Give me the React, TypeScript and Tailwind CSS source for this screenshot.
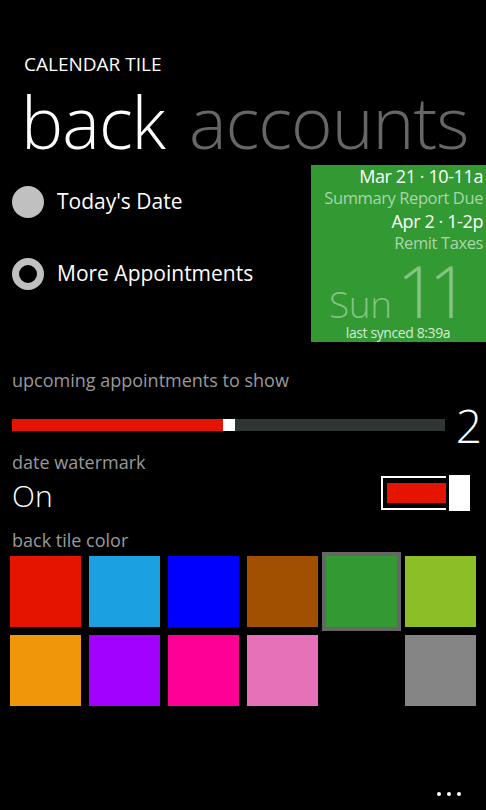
import React from 'react';

const row1 = ['#e51400', '#1ba1e2', '#0000ff', '#a05000', '#339933', '#8cbf26'];
const row2 = ['#f09609', '#a200ff', '#ff0097', '#e671b8', 'transparent', '#858585'];

function Swatch({ color, selected }: { color: string; selected?: boolean }) {
  return (
    <div className={`w-[79px] h-[79px] flex items-center justify-center ${selected ? 'border-[4px] border-[#666666]' : ''}`}>
      <div className="w-[71px] h-[71px]" style={{ backgroundColor: color }} />
    </div>
  );
}

export default function App() {
  return (
    <div className="w-[486px] h-[810px] bg-black text-white overflow-hidden flex flex-col font-['Open_Sans',sans-serif]">
      {/* Header */}
      <div className="pl-[24px] pt-[52px] text-[19px] leading-[24px]">CALENDAR TILE</div>
      <div className="flex gap-[24px] pl-[21px] mt-[9px] text-[71px] leading-[74px] font-light tracking-[-1px]">
        <span>back</span>
        <span className="text-[#666666]">accounts</span>
      </div>

      {/* Radios + tile */}
      <div className="flex justify-between mt-[6px]">
        <div className="flex flex-col pl-[12px] pt-[21px] gap-[40px]">
          <div className="flex items-center gap-[13px]">
            <div className="w-[32px] h-[32px] rounded-full bg-[#c0c0c0]" />
            <span className="text-[21px] leading-[32px] -mt-[3px]">Today's Date</span>
          </div>
          <div className="flex items-center gap-[13px]">
            <div className="w-[32px] h-[32px] rounded-full border-[7px] border-[#c0c0c0]" />
            <span className="text-[21px] leading-[32px] -mt-[3px]">More Appointments</span>
          </div>
        </div>
        <div className="w-[175px] h-[177px] bg-[#339933] flex flex-col items-end pr-[3px] tracking-tight">
          <div className="text-[18px] leading-[23px]">Mar 21 · 10-11a</div>
          <div className="text-[16.5px] leading-[20px] text-[#a9d6a9]">Summary Report Due</div>
          <div className="text-[18px] leading-[23px] mt-[2px]">Apr 2 · 1-2p</div>
          <div className="text-[16.5px] leading-[20px] text-[#a9d6a9]">Remit Taxes</div>
          <div className="self-center flex flex-col items-center mt-auto pb-[1px] pl-[2px]">
            <div className="flex items-baseline gap-[5px] text-[#85c285] font-light">
              <span className="text-[37px] leading-[40px]">Sun</span>
              <span className="text-[72px] leading-[68px] tracking-[-9px] pr-[6px]">11</span>
            </div>
            <div className="text-[14px] leading-[17px] text-[#d6ebd6]">last synced 8:39a</div>
          </div>
        </div>
      </div>

      {/* Slider */}
      <div className="pl-[12px] mt-[26px] text-[18px] leading-[24px] text-[#999999]">upcoming appointments to show</div>
      <div className="flex items-center pl-[12px] pr-[4px] mt-[10px]">
        <div className="flex w-[433px] h-[12px]">
          <div className="w-[211px] bg-[#e51400]" />
          <div className="w-[12px] bg-white" />
          <div className="flex-1 bg-[#2f3532]" />
        </div>
        <div className="ml-auto text-[46px] leading-[46px] font-light">2</div>
      </div>

      {/* Watermark toggle */}
      <div className="pl-[12px] mt-[2px] text-[18px] leading-[24px] text-[#999999]">date watermark</div>
      <div className="flex items-center justify-between pl-[12px] pr-[16px]">
        <span className="text-[30px] leading-[40px] font-light mt-[2px]">On</span>
        <div className="flex items-center -mt-[4px]">
          <div className="w-[65px] h-[34px] border-[2px] border-white pl-[4px] py-[5px] border-r-0">
            <div className="w-full h-full bg-[#e51400]" />
          </div>
          <div className="w-[21px] h-[36px] bg-white ml-[3px]" />
        </div>
      </div>

      {/* Colors */}
      <div className="pl-[12px] mt-[12px] text-[18px] leading-[24px] text-[#999999]">back tile color</div>
      <div className="grid grid-cols-6 w-[474px] ml-[6px]">
        {row1.map((c, i) => (
          <Swatch key={c} color={c} selected={i === 4} />
        ))}
        {row2.map((c, i) => (
          <Swatch key={i} color={c} />
        ))}
      </div>

      {/* App bar */}
      <div className="mt-auto flex justify-end gap-[6px] pr-[25px] pb-[14px]">
        <div className="w-[4px] h-[4px] rounded-full bg-white" />
        <div className="w-[4px] h-[4px] rounded-full bg-white" />
        <div className="w-[4px] h-[4px] rounded-full bg-white" />
      </div>
    </div>
  );
}
